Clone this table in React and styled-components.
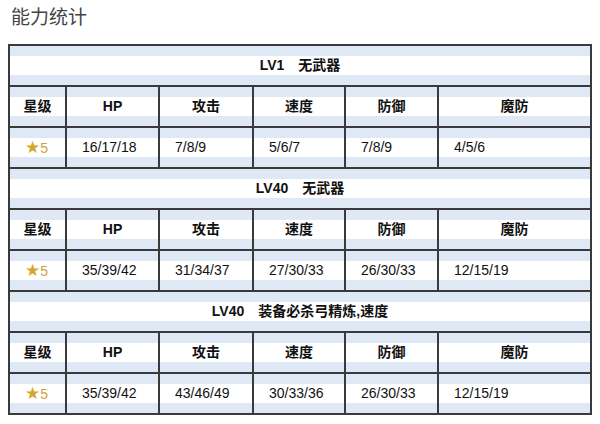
import styled, { createGlobalStyle } from 'styled-components'

const GlobalStyle = createGlobalStyle`
    body {
        margin: 0;
        background: #fff;
        font-family: "Liberation Sans", Arial, "Noto Sans CJK SC", sans-serif;
    }
`
const Page = styled.div`
    padding: 0 8px;
`
const Titulo = styled.h2`
    margin: 0 0 16px 0;
    padding: 4px 0 0 3px;
    font-family: "Noto Sans CJK SC", sans-serif;
    font-weight: normal;
    font-size: 19px;
    line-height: 24px;
    color: #444;
`
const Tabla = styled.table`
    width: 584px;
    table-layout: fixed;
    border-collapse: separate;
    border-spacing: 0;
    border: 1px solid #3a3a3a;
`
const Celda = styled.td`
    height: 39px;
    padding: 0 ${p => (p.$head ? '0' : '15px')};
    border: 1px solid #3a3a3a;
    background: linear-gradient(
        to bottom,
        #dfe9f5 0,
        #dfe9f5 10px,
        #fff 10px,
        #fff calc(100% - 10px),
        #dfe9f5 calc(100% - 10px)
    );
    font-size: 14px;
    line-height: 19px;
    color: #111;
    text-align: ${p => (p.$head ? 'center' : 'left')};
    font-weight: ${p => (p.$head ? 'bold' : 'normal')};
    white-space: nowrap;
`
const Estrella = styled.span`
    color: #d6a62a;
    font-family: "DejaVu Sans", sans-serif;
    font-size: 17px;
    line-height: 19px;
`
const Nivel = styled.span`
    color: #d2a33a;
`

const columnas = [57, 93, 94, 92, 93, 153]
const cabecera = ['星级', 'HP', '攻击', '速度', '防御', '魔防']

const bloques = [
    { titulo: 'LV1　无武器', valores: ['16/17/18', '7/8/9', '5/6/7', '7/8/9', '4/5/6'] },
    { titulo: 'LV40　无武器', valores: ['35/39/42', '31/34/37', '27/30/33', '26/30/33', '12/15/19'] },
    { titulo: 'LV40　装备必杀弓精炼,速度', valores: ['35/39/42', '43/46/49', '30/33/36', '26/30/33', '12/15/19'] },
]

const App = () => {
    return (
        <Page>
            <GlobalStyle />
            <Titulo>能力统计</Titulo>
            <Tabla>
                <colgroup>
                    {columnas.map((w, i) => <col key={i} style={{ width: w }} />)}
                </colgroup>
                <tbody>
                    {bloques.map((b, i) => [
                        <tr key={'t' + i}>
                            <Celda $head colSpan={6}>{b.titulo}</Celda>
                        </tr>,
                        <tr key={'h' + i}>
                            {cabecera.map(c => <Celda $head key={c}>{c}</Celda>)}
                        </tr>,
                        <tr key={'d' + i}>
                            <Celda><Estrella>★</Estrella><Nivel>5</Nivel></Celda>
                            {b.valores.map((v, j) => <Celda key={j}>{v}</Celda>)}
                        </tr>,
                    ])}
                </tbody>
            </Tabla>
        </Page>
    )
}

export default App
